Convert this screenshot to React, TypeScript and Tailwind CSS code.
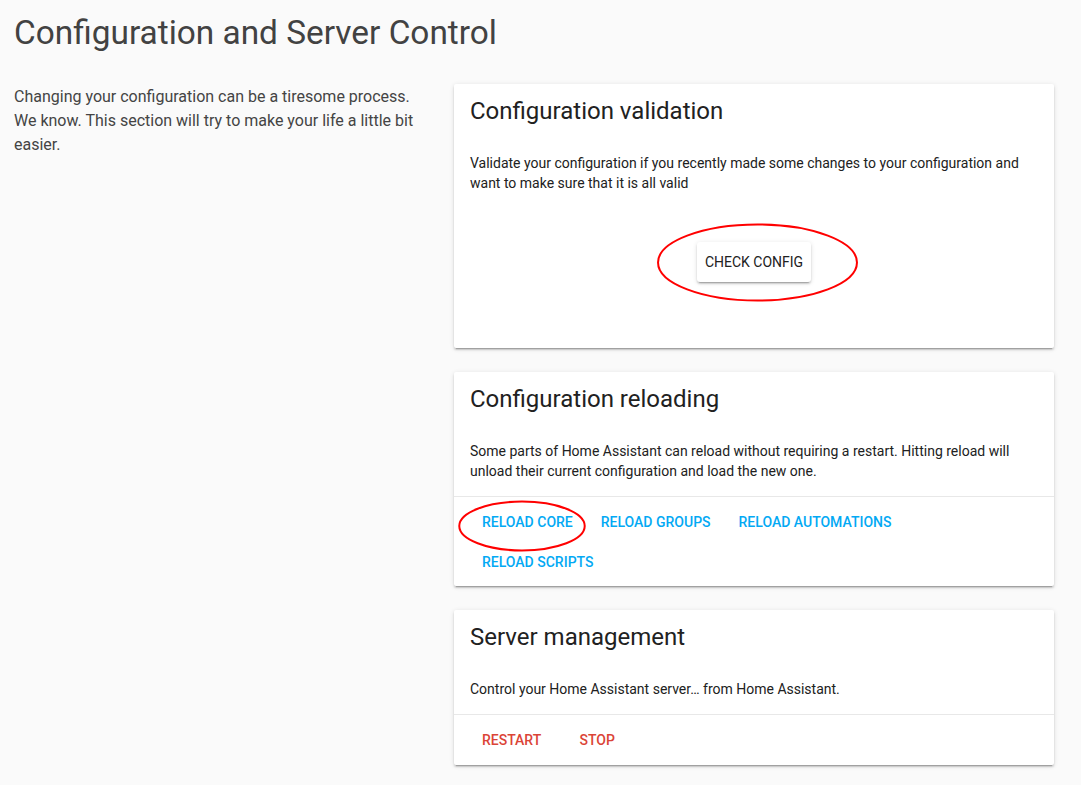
import React from 'react';

// ── Shared bits ───────────────────────────────────────────────────────────────

const CARD = 'relative bg-white rounded-[2px] shadow-[0_2px_2px_0_rgba(0,0,0,0.14),0_1px_5px_0_rgba(0,0,0,0.12),0_3px_1px_-2px_rgba(0,0,0,0.2)]';

function CardHeader({ children }: { children: React.ReactNode }) {
  return (
    <div className="px-4 pt-[11px] pb-[10px] text-2xl leading-8 text-[#212121]">
      {children}
    </div>
  );
}

function CardText({ children }: { children: React.ReactNode }) {
  return <div className="px-4 pt-4 pb-[15px] text-sm leading-5 text-[#212121]">{children}</div>;
}

function FlatButton({ label, tone }: { label: string; tone: 'blue' | 'red' }) {
  return (
    <button
      className={
        'h-[38px] min-w-[72px] px-2 pt-[2px] text-center text-sm font-medium uppercase ' +
        (tone === 'blue' ? 'text-[#03a9f4]' : 'text-[#db4437]')
      }
    >
      {label}
    </button>
  );
}

// red marker ellipse drawn over the screenshot
function Ring({ className }: { className: string }) {
  return (
    <svg className={'absolute pointer-events-none ' + className} viewBox="0 0 100 100" preserveAspectRatio="none">
      <ellipse cx="50" cy="50" rx="49" ry="47" fill="none" stroke="#ff0000" strokeWidth="2" vectorEffect="non-scaling-stroke" />
    </svg>
  );
}

// ── Page ──────────────────────────────────────────────────────────────────────

export default function App() {
  return (
    <div className="min-h-screen bg-[#fafafa] px-[14px] pt-[13px] pb-5 font-['Roboto',sans-serif]">
      <h1 className="text-[33.4px] leading-[40px] font-normal text-[#424242]">
        Configuration and Server Control
      </h1>

      <div className="mt-[31px] flex">
        <p className="w-[416px] shrink-0 pt-px text-base leading-6 text-[#444444]">
          Changing your configuration can be a tiresome process. We know. This section will try to make your life a little bit easier.
        </p>

        <div className="ml-6 flex w-[600px] flex-col gap-6">
          {/* ── Configuration validation ─────────────────────────── */}
          <div className={CARD}>
            <CardHeader>Configuration validation</CardHeader>
            <CardText>
              Validate your configuration if you recently made some changes to your configuration and want to make sure that it is all valid
            </CardText>
            <div className="relative flex justify-center pt-[34px] pb-[66px]">
              <button className="h-10 rounded-[3px] bg-white px-2 text-sm uppercase text-[#212121] shadow-[0_2px_2px_0_rgba(0,0,0,0.14),0_1px_5px_0_rgba(0,0,0,0.12),0_3px_1px_-2px_rgba(0,0,0,0.2)]">
                Check config
              </button>
              <Ring className="left-[202px] top-[14px] h-[81px] w-[203px]" />
            </div>
          </div>

          {/* ── Configuration reloading ──────────────────────────── */}
          <div className={CARD}>
            <CardHeader>Configuration reloading</CardHeader>
            <CardText>
              Some parts of Home Assistant can reload without requiring a restart. Hitting reload will unload their current configuration and load the new one.
            </CardText>
            <div className="relative flex flex-wrap gap-x-3 gap-y-[2px] border-t border-[#e8e8e8] pl-5 pr-5 pt-[5px] pb-[6px]">
              <FlatButton label="Reload core" tone="blue" />
              <FlatButton label="Reload groups" tone="blue" />
              <FlatButton label="Reload automations" tone="blue" />
              <FlatButton label="Reload scripts" tone="blue" />
              <Ring className="left-[4px] top-[3px] h-[52px] w-[128px]" />
            </div>
          </div>

          {/* ── Server management ────────────────────────────────── */}
          <div className={CARD}>
            <CardHeader>Server management</CardHeader>
            <CardText>Control your Home Assistant server… from Home Assistant.</CardText>
            <div className="flex flex-wrap gap-x-3 border-t border-[#e8e8e8] pl-5 pr-5 pt-[5px] pb-[7px]">
              <FlatButton label="Restart" tone="red" />
              <FlatButton label="Stop" tone="red" />
            </div>
          </div>
        </div>
      </div>
    </div>
  );
}
